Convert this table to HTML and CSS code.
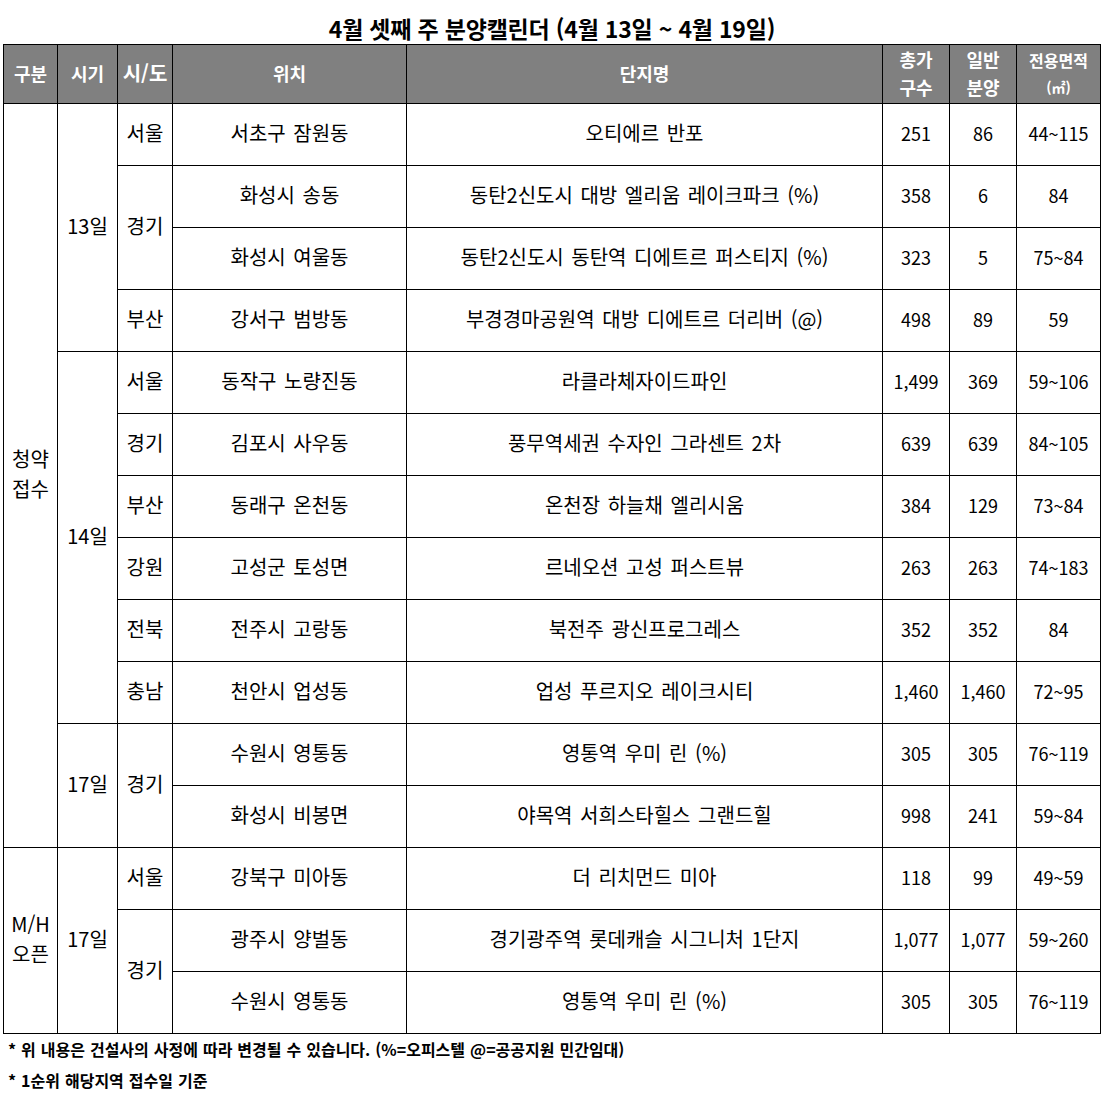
FILE: index.html
```html
<!DOCTYPE html>
<html lang="ko">
<head>
<meta charset="utf-8">
<link rel="stylesheet" href="styles.css">
</head>
<body>
<div class="page">
  <h1 class="title">4월 셋째 주 분양캘린더 (4월 13일 ~ 4월 19일)</h1>
  <table class="cal">
    <colgroup>
      <col class="c-type"><col class="c-date"><col class="c-region"><col class="c-loc"><col class="c-name"><col class="c-total"><col class="c-gen"><col class="c-area">
    </colgroup>
    <thead>
      <tr>
        <th>구분</th><th>시기</th><th class="big">시/도</th><th>위치</th><th>단지명</th>
        <th>총가<br>구수</th><th>일반<br>분양</th><th class="small">전용면적<br><span class="unit">(㎡)</span></th>
      </tr>
    </thead>
    <tbody>
      <tr><td rowspan="12">청약<br>접수</td><td rowspan="4">13일</td><td>서울</td><td>서초구 잠원동</td><td>오티에르 반포</td><td class="num">251</td><td class="num">86</td><td class="num">44~115</td></tr>
      <tr><td rowspan="2">경기</td><td>화성시 송동</td><td>동탄2신도시 대방 엘리움 레이크파크 (%)</td><td class="num">358</td><td class="num">6</td><td class="num">84</td></tr>
      <tr><td>화성시 여울동</td><td>동탄2신도시 동탄역 디에트르 퍼스티지 (%)</td><td class="num">323</td><td class="num">5</td><td class="num">75~84</td></tr>
      <tr><td>부산</td><td>강서구 범방동</td><td>부경경마공원역 대방 디에트르 더리버 (@)</td><td class="num">498</td><td class="num">89</td><td class="num">59</td></tr>
      <tr><td rowspan="6">14일</td><td>서울</td><td>동작구 노량진동</td><td>라클라체자이드파인</td><td class="num">1,499</td><td class="num">369</td><td class="num">59~106</td></tr>
      <tr><td>경기</td><td>김포시 사우동</td><td>풍무역세권 수자인 그라센트 2차</td><td class="num">639</td><td class="num">639</td><td class="num">84~105</td></tr>
      <tr><td>부산</td><td>동래구 온천동</td><td>온천장 하늘채 엘리시움</td><td class="num">384</td><td class="num">129</td><td class="num">73~84</td></tr>
      <tr><td>강원</td><td>고성군 토성면</td><td>르네오션 고성 퍼스트뷰</td><td class="num">263</td><td class="num">263</td><td class="num">74~183</td></tr>
      <tr><td>전북</td><td>전주시 고랑동</td><td>북전주 광신프로그레스</td><td class="num">352</td><td class="num">352</td><td class="num">84</td></tr>
      <tr><td>충남</td><td>천안시 업성동</td><td>업성 푸르지오 레이크시티</td><td class="num">1,460</td><td class="num">1,460</td><td class="num">72~95</td></tr>
      <tr><td rowspan="2">17일</td><td rowspan="2">경기</td><td>수원시 영통동</td><td>영통역 우미 린 (%)</td><td class="num">305</td><td class="num">305</td><td class="num">76~119</td></tr>
      <tr><td>화성시 비봉면</td><td>야목역 서희스타힐스 그랜드힐</td><td class="num">998</td><td class="num">241</td><td class="num">59~84</td></tr>
      <tr><td rowspan="3">M/H<br>오픈</td><td rowspan="3">17일</td><td>서울</td><td>강북구 미아동</td><td>더 리치먼드 미아</td><td class="num">118</td><td class="num">99</td><td class="num">49~59</td></tr>
      <tr><td rowspan="2">경기</td><td>광주시 양벌동</td><td>경기광주역 롯데캐슬 시그니처 1단지</td><td class="num">1,077</td><td class="num">1,077</td><td class="num">59~260</td></tr>
      <tr><td>수원시 영통동</td><td>영통역 우미 린 (%)</td><td class="num">305</td><td class="num">305</td><td class="num">76~119</td></tr>
    </tbody>
  </table>
  <p class="note">* 위 내용은 건설사의 사정에 따라 변경될 수 있습니다. (%=오피스텔 @=공공지원 민간임대)</p>
  <p class="note">* 1순위 해당지역 접수일 기준</p>
</div>
</body>
</html>
```

FILE: styles.css
```css
html, body {
  margin: 0;
  padding: 0;
  background: #ffffff;
}

body {
  font-family: "Noto Sans CJK KR", "Noto Sans", sans-serif;
  color: #000000;
}

.page {
  width: 1098px;
  padding: 0 0 0 3px;
}

.title {
  margin: 0;
  height: 44px;
  line-height: 56px;
  font-size: 23px;
  font-weight: 700;
  text-align: center;
  letter-spacing: -0.2px;
}

.cal {
  width: 1098px;
  table-layout: fixed;
  border-collapse: collapse;
  border: 1px solid #000;
}

.c-type { width: 54px; }
.c-date { width: 60px; }
.c-region { width: 55px; }
.c-loc { width: 234px; }
.c-name { width: 476px; }
.c-total { width: 67px; }
.c-gen { width: 67px; }
.c-area { width: 84px; }

.cal th,
.cal td {
  border: 1px solid #000;
  padding: 0;
  text-align: center;
  vertical-align: middle;
  white-space: nowrap;
}

.cal thead tr {
  height: 59px;
}

.cal th {
  background: #808080;
  color: #ffffff;
  font-weight: 700;
  font-size: 18px;
  line-height: 28px;
  padding-bottom: 2px;
}

.cal th.big {
  font-size: 20px;
}

.cal th.small {
  font-size: 16px;
  line-height: 26px;
}

.cal th .unit {
  font-size: 14px;
}

.cal tbody tr {
  height: 62px;
}

.cal td {
  font-size: 20px;
  line-height: 30px;
  word-spacing: 2px;
  padding-bottom: 3px;
}

.cal td.num {
  font-size: 18px;
  word-spacing: 0;
}

.note {
  margin: 0;
  padding-left: 5px;
  font-size: 16px;
  font-weight: 700;
  line-height: 31px;
  word-spacing: 0.5px;
}
```
